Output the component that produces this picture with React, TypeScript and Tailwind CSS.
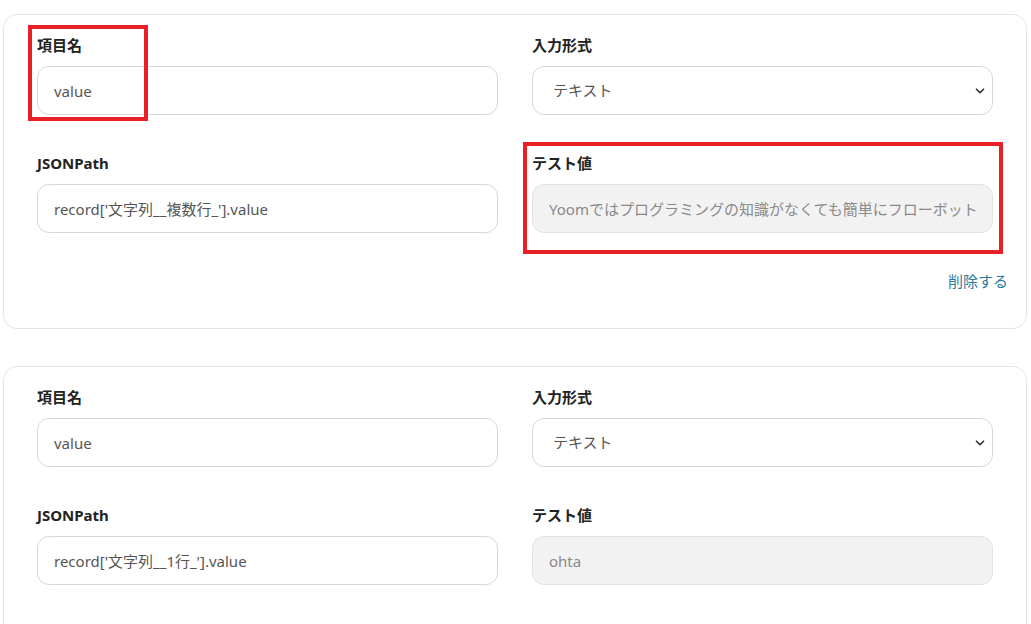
import { ChevronDown } from 'lucide-react';

type Field = {
  name: string;
  path: string;
  format: string;
  sample: string;
};

const fields: Field[] = [
  {
    name: 'value',
    path: "record['文字列__複数行_'].value",
    format: 'テキスト',
    sample: 'Yoomではプログラミングの知識がなくても簡単にフローボットを作成できます。',
  },
  {
    name: 'value',
    path: "record['文字列__1行_'].value",
    format: 'テキスト',
    sample: 'ohta',
  },
];

const font = "font-['Noto_Sans','Noto_Sans_CJK_JP',sans-serif]";

function Label({ children }: { children: React.ReactNode }) {
  return (
    <label className="block mb-[11px] text-[15px] leading-[20px] font-bold text-[#222]">
      {children}
    </label>
  );
}

const inputBase =
  'block w-full h-[49px] rounded-[12px] border px-4 text-[15px] outline-none';

function FieldCard({ field, removable }: { field: Field; removable?: boolean }) {
  return (
    <div
      className={`rounded-[14px] border border-[#e2e4e9] bg-white px-[33px] pt-[20px] ${
        removable ? 'pb-[37px]' : 'pb-[95px]'
      }`}
    >
      <div className="grid grid-cols-2 gap-x-[34px] gap-y-[38px]">
        <div>
          <Label>項目名</Label>
          <input
            className={`${inputBase} border-[#d3d7de] text-[#555]`}
            defaultValue={field.name}
          />
        </div>
        <div>
          <Label>入力形式</Label>
          <div className="relative">
            <select
              className={`${inputBase} appearance-none border-[#d3d7de] bg-white pl-5 text-[#555]`}
              defaultValue={field.format}
            >
              <option>テキスト</option>
              <option>数値</option>
              <option>日付</option>
            </select>
            <ChevronDown
              size={14}
              strokeWidth={3}
              className="pointer-events-none absolute right-[6px] top-1/2 -translate-y-1/2 text-[#333]"
            />
          </div>
        </div>
        <div>
          <Label>JSONPath</Label>
          <input
            className={`${inputBase} border-[#d3d7de] text-[#555]`}
            defaultValue={field.path}
          />
        </div>
        <div>
          <Label>テスト値</Label>
          <input
            readOnly
            className={`${inputBase} border-[#e3e3e3] bg-[#f2f2f2] text-[#8a8a8a]`}
            value={field.sample}
          />
        </div>
      </div>
      {removable && (
        <div className="mt-[38px] -mr-[15px] flex justify-end">
          <button className="text-[15px] leading-[20px] text-[#2b7b9b]">削除する</button>
        </div>
      )}
    </div>
  );
}

export default function App() {
  return (
    <div className={`relative h-[624px] overflow-hidden bg-white pl-[3px] pr-[4px] pt-[14px] ${font}`}>
      <div className="flex flex-col gap-[37px]">
        <FieldCard field={fields[0]} removable />
        <FieldCard field={fields[1]} />
      </div>

      {/* highlight frames */}
      <div className="pointer-events-none absolute left-[28px] top-[25px] h-[96px] w-[120px] border-[4px] border-[#e8202a]" />
      <div className="pointer-events-none absolute left-[523px] top-[142px] h-[112px] w-[480px] border-[4px] border-[#e8202a]" />
    </div>
  );
}
